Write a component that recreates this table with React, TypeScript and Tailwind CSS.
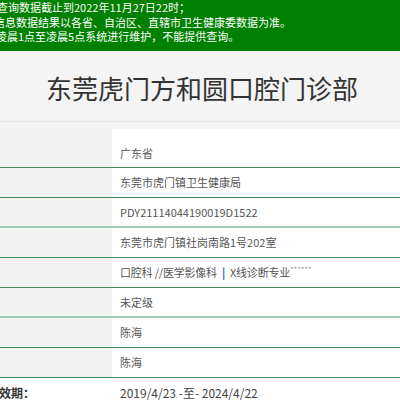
const font = { fontFamily: '"Noto Sans CJK SC", "Noto Sans", sans-serif' }

const rows: { value: React.ReactNode; light?: boolean; first?: boolean }[] = [
  { value: '广东省', first: true },
  { value: '东莞市虎门镇卫生健康局' },
  { value: 'PDY21114044190019D1522', light: true },
  { value: '东莞市虎门镇社岗南路1号202室' },
  {
    value: (
      <span className="flex items-center tracking-[-0.2px]">
        口腔科 //医学影像科
        <span className="mx-[5px] font-bold text-[#2f5fb0]">|</span>
        X线诊断专业<span className="text-[8px] text-[#999] relative -top-[3px]">******</span>
      </span>
    ),
  },
  { value: '未定级', light: true },
  { value: '陈海' },
  { value: '陈海' },
]

export default function App() {
  return (
    <div className="w-[400px] h-[400px] overflow-hidden bg-[#f4f4f4]" style={font}>
      {/* 提示 */}
      <div className="h-[51px] bg-[#008000] text-white text-[11px] leading-[14.5px] whitespace-nowrap">
        <div className="-ml-[3px]">查询数据截止到2022年11月27日22时；</div>
        <div className="-ml-[6px]">信息数据结果以各省、自治区、直辖市卫生健康委数据为准。</div>
        <div className="-ml-[4px]">凌晨1点至凌晨5点系统进行维护，不能提供查询。</div>
      </div>

      {/* 标题 */}
      <div className="h-[71px] flex items-center justify-center border-b border-[#e6e6e6]">
        <h1 className="text-[26px] text-[#333] pl-[4px] pt-[3px]">东莞虎门方和圆口腔门诊部</h1>
      </div>

      <div className="pt-[7px]">
        {rows.map((r, i) => (
          <div
            key={i}
            className={`flex ${r.light ? 'border-b-2 border-[#9fcdb4]' : 'border-b border-[#3f8c5f]'}`}
          >
            <div className="w-[112px] bg-[#f2f2f2]" />
            <div
              className={`flex-1 bg-white flex items-center pl-[8px] text-[11px] text-[#555] ${
                r.first ? 'h-[38px] pt-[10px]' : r.light ? 'h-[28px]' : 'h-[29px]'
              }`}
            >
              {r.value}
            </div>
          </div>
        ))}
        <div className="flex bg-white h-[30px] items-center">
          <div className="w-[112px] -ml-[13px] text-[12px] font-semibold text-[#333]">有效期：</div>
          <div className="pl-[21px] text-[12px] text-[#444]">2019/4/23 -至- 2024/4/22</div>
        </div>
      </div>
    </div>
  )
}
